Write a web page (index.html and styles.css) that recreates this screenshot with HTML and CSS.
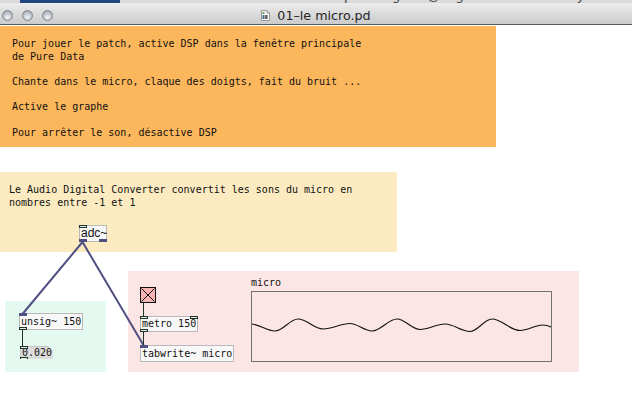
FILE: index.html
```html
<!DOCTYPE html>
<html lang="fr">
<head>
<meta charset="utf-8">
<title>01-le micro.pd</title>
<link rel="stylesheet" href="styles.css">
</head>
<body>
<div class="screen">
  <div class="behind">
    <span class="behind-blue"></span>
    <span class="behind-text">Adrian Workshop</span>
    <span class="behind-text behind-text-2">vagrant@vagrant-ubuntu-trusty-64: ~</span>
  </div>
  <header class="titlebar">
    <div class="lights">
      <span class="light"></span>
      <span class="light"></span>
      <span class="light"></span>
    </div>
    <div class="title">
      <svg class="doc-icon" width="9" height="11" viewBox="0 0 9 11">
        <path d="M0.5 0.5 H6 L8.5 3 V10.5 H0.5 Z" fill="#fafafa" stroke="#9a9a9a"/>
        <path d="M6 0.5 V3 H8.5" fill="none" stroke="#9a9a9a"/>
        <rect x="1.5" y="2" width="2" height="2" fill="#5aa84a"/>
        <rect x="1.5" y="5" width="2" height="4" fill="#3d6b9a"/>
        <rect x="4.2" y="5" width="2.3" height="4" fill="#555"/>
      </svg>
      <span>01–le micro.pd</span>
    </div>
    <div></div>
  </header>

  <main class="canvas">
    <div class="cnv cnv-orange">
      <p class="comment">
        <span class="line">Pour jouer le patch, active DSP dans la fenêtre principale</span>
        <span class="line">de Pure Data</span>
        <span class="line"></span>
        <span class="line">Chante dans le micro, claque des doigts, fait du bruit ...</span>
        <span class="line"></span>
        <span class="line">Active le graphe</span>
        <span class="line"></span>
        <span class="line">Pour arrêter le son, désactive DSP</span>
      </p>
    </div>
    <div class="cnv cnv-yellow">
      <p class="comment">
        <span class="line">Le Audio Digital Converter convertit les sons du micro en</span>
        <span class="line">nombres entre -1 et 1</span>
      </p>
    </div>
    <div class="cnv cnv-green"></div>
    <div class="cnv cnv-pink"></div>

    <svg class="wires" width="632" height="387" viewBox="0 0 632 387">
      <g class="sig">
        <path d="M82.5 217 L22.5 289"/>
        <path d="M82.5 217 L144 321"/>
      </g>
      <g class="ctl">
        <path d="M22.5 305 V321"/>
        <path d="M143.5 278 V291"/>
        <path d="M143.5 307 V320"/>
      </g>
      <path class="wave" d="M251 299 C259.6 299 266.4 306 275 306 C283.3 306 289.7 294 298 294 C307 294 314 304 323 304 C332.7 304 340.3 298.5 350 298.5 C357.9 298.5 364.1 306 372 306 C381 306 388 294 397 294 C405.3 294 411.7 304.5 420 304.5 C429 304.5 436 299 445 299 C454 299 461 306.5 470 306.5 C477.9 306.5 484.1 294 492 294 C502.1 294 509.9 305.5 520 305.5 C528.3 305.5 534.7 300 543 300 C546 300 549 301 551 302"/>
    </svg>

    <div class="obj obj-adc">adc~<span class="port port-ctl port-in"></span><span class="port port-sig port-out"></span><span class="port port-sig port-out port-right"></span></div>

    <div class="obj obj-unsig">unsig~ 150<span class="port port-sig port-in"></span><span class="port port-ctl port-out"></span></div>

    <div class="num">0.020<span class="port port-ctl port-in"></span><span class="port port-ctl port-out"></span></div>

    <div class="toggle">
      <svg width="14" height="14" viewBox="0 0 14 14"><path d="M0.5 0.5 L13.5 13.5 M13.5 0.5 L0.5 13.5" stroke="#111" stroke-width="1"/></svg>
    </div>

    <div class="obj obj-metro">metro 150<span class="port port-ctl port-in"></span><span class="port port-ctl port-in port-right"></span><span class="port port-ctl port-out"></span></div>

    <div class="obj obj-tabwrite">tabwrite~ micro<span class="port port-sig port-in"></span></div>

    <span class="graph-label">micro</span>
    <div class="graph-box"></div>
  </main>
</div>
</body>
</html>
```

FILE: styles.css
```css
* {
  box-sizing: border-box;
}

html,
body {
  margin: 0;
  padding: 0;
}

body {
  width: 632px;
  height: 412px;
  overflow: hidden;
  background: #ffffff;
  font-family: "DejaVu Sans Mono", "Liberation Mono", monospace;
}

.screen {
  display: flex;
  flex-direction: column;
  width: 632px;
  height: 412px;
}

/* strip of the window behind */
.behind {
  display: flex;
  align-items: flex-start;
  height: 3px;
  overflow: hidden;
  background: #dadada;
  padding-left: 20px;
}

.behind-blue {
  width: 100px;
  height: 3px;
  background: #22467f;
  flex: none;
}

.behind-text {
  margin-left: 122px;
  margin-top: -11px;
  font: 13px/14px "DejaVu Sans", sans-serif;
  color: #444;
  white-space: pre;
}

.behind-text-2 {
  margin-left: 24px;
}

/* title bar */
.titlebar {
  display: grid;
  grid-template-columns: 1fr auto 1fr;
  align-items: center;
  height: 22px;
  padding-top: 3px;
  background: linear-gradient(#ececec, #cbcbcb);
  border-bottom: 1px solid #5a5a5a;
}

.lights {
  display: flex;
  gap: 9px;
  padding-left: 2px;
}

.light {
  width: 11px;
  height: 11px;
  border-radius: 50%;
  border: 1px solid #80878f;
  background: radial-gradient(circle at 50% 70%, #f4f6f8 0%, #c7ccd2 45%, #8f969e 100%);
}

.title {
  display: flex;
  align-items: center;
  gap: 7px;
  font: 12.7px "DejaVu Sans", sans-serif;
  color: #252525;
}

.doc-icon {
  display: block;
}

/* patch canvas */
.canvas {
  position: relative;
  height: 387px;
  overflow: hidden;
  background: #ffffff;
}

.cnv {
  position: absolute;
}

.cnv-orange {
  left: 0;
  top: 1px;
  width: 496px;
  height: 121px;
  background: #fcb75c;
  padding: 12px 0 0 12px;
}

.cnv-yellow {
  left: 0;
  top: 147px;
  width: 397px;
  height: 80px;
  background: #fcebc1;
  padding: 12px 0 0 9px;
}

.cnv-green {
  left: 5px;
  top: 276px;
  width: 101px;
  height: 71px;
  background: #e4faf0;
}

.cnv-pink {
  left: 128px;
  top: 246px;
  width: 451px;
  height: 101px;
  background: #fce5e5;
}

.comment {
  margin: 0;
  display: grid;
  grid-auto-rows: 12.67px;
  font-size: 10px;
  line-height: 12.67px;
  color: #111;
}

.line {
  white-space: pre;
}

/* connections */
.wires {
  position: absolute;
  left: 0;
  top: 0;
  pointer-events: none;
}

.sig path {
  stroke: #4f4f82;
  stroke-width: 2;
  fill: none;
}

.ctl path {
  stroke: #22332a;
  stroke-width: 1;
  fill: none;
}

.wave {
  stroke: #111;
  stroke-width: 1.1;
  fill: none;
}

/* objects */
.obj {
  position: absolute;
  height: 17px;
  padding: 0 1px;
  border: 1px solid #b9b9b9;
  background: #f8f8f8;
  font-size: 10px;
  line-height: 15px;
  color: #111;
  white-space: pre;
}

.obj-adc {
  left: 79px;
  top: 200px;
  width: 28px;
  font-family: "Liberation Sans", sans-serif;
  font-size: 12px;
}

.obj-unsig {
  left: 19px;
  top: 288px;
}

.obj-metro {
  left: 140px;
  top: 291px;
  height: 16px;
  line-height: 14px;
}

.obj-tabwrite {
  left: 140px;
  top: 320px;
}

.num {
  position: absolute;
  left: 20px;
  top: 321px;
  width: 33px;
  height: 13px;
  padding: 1px 0 0 1px;
  background: #dcdcdc;
  border-top: 1px solid #c4c4c4;
  border-left: 1px solid #c4c4c4;
  clip-path: polygon(0 0, calc(100% - 5px) 0, 100% 5px, 100% 100%, 0 100%);
  font-size: 10px;
  line-height: 9px;
  color: #111;
}

.toggle {
  position: absolute;
  left: 140px;
  top: 262px;
  width: 16px;
  height: 16px;
  border: 1px solid #111;
  background: #f6b4b4;
}

.toggle svg {
  display: block;
}

/* inlets / outlets */
.port {
  position: absolute;
  left: -1px;
  width: 8px;
  height: 3px;
}

.port-ctl {
  border: 1px solid #1f3326;
  background: #e4ece4;
}

.port-sig {
  background: #4f4f82;
}

.port-in {
  top: -1px;
}

.port-out {
  bottom: -1px;
}

.port-right {
  left: auto;
  right: -1px;
}

/* graph */
.graph-label {
  position: absolute;
  left: 251px;
  top: 252px;
  font-size: 10px;
  line-height: 12.67px;
  color: #111;
}

.graph-box {
  position: absolute;
  left: 251px;
  top: 266px;
  width: 301px;
  height: 71px;
  border: 1px solid #727272;
}
```
